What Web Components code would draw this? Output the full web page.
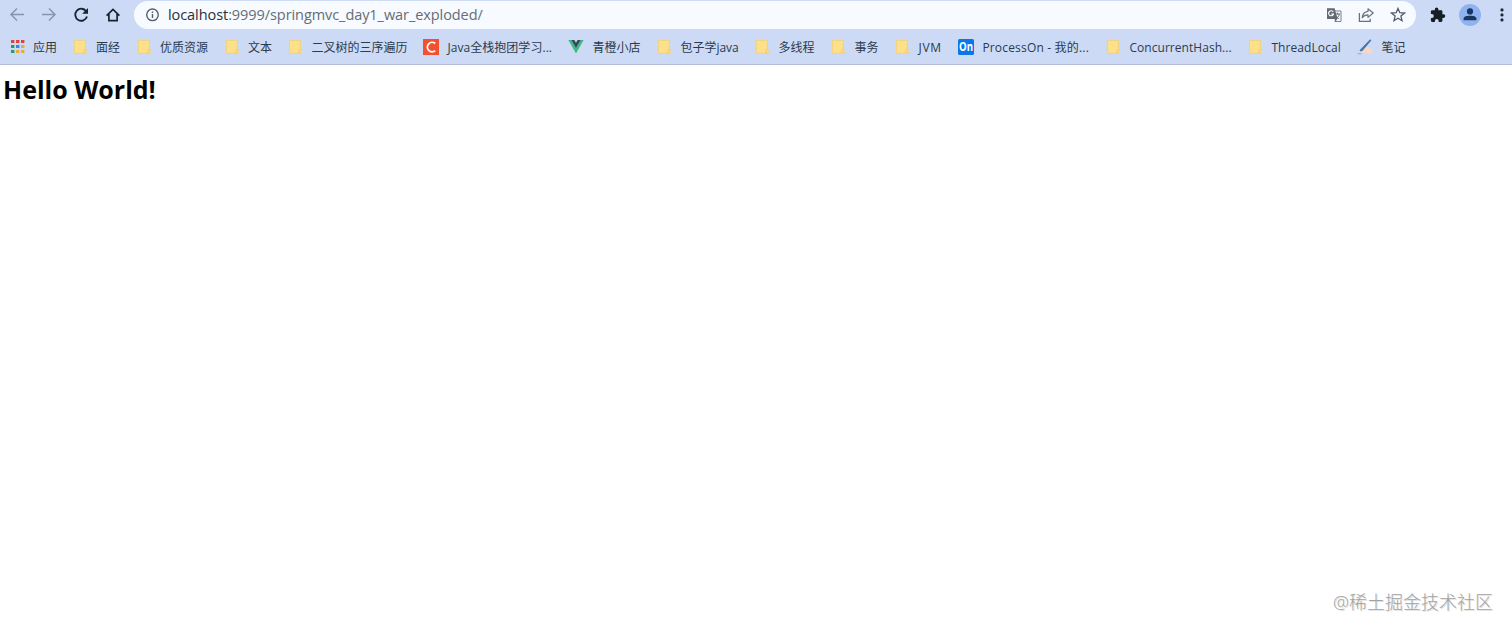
<!DOCTYPE html>
<html lang="zh-CN">
<head>
<meta charset="utf-8">
<title>Hello World</title>
<style>
  html, body { margin: 0; height: 100%; overflow: hidden; background: #fff; }
  body { font-family: "Open Sans", "Noto Sans CJK SC", sans-serif; }
</style>
</head>
<body>
<browser-window></browser-window>
<script>
const colors = {
  toolbar: "#cddaf5",
  field: "#f7faff",
  line: "#b1bdd8",
  ink: "#2b3a4c",
  icon: "#17242f",
  muted: "#8795ad",
};

const icons = {
  back: `<path d="M15 7.5H2M8 1.5l-6 6 6 6" fill="none" stroke="${colors.muted}" stroke-width="1.5"/>`,
  forward: `<path d="M1 7.5h13M8 1.5l6 6-6 6" fill="none" stroke="${colors.muted}" stroke-width="1.5"/>`,
  reload: `<path d="M13.2 4.3A6 6 0 1 0 14 9.5" fill="none" stroke="${colors.icon}" stroke-width="1.8"/><path d="M15 .9v5.8H9.2z" fill="${colors.icon}"/>`,
  home: `<path d="M1.6 8.6 8 2.4l6.4 6.2M3.9 7v6.6h8.2V7" fill="none" stroke="${colors.icon}" stroke-width="1.7"/>`,
  info: `<circle cx="8.5" cy="7.8" r="5.8" fill="none" stroke="#56606b" stroke-width="1.4"/><path d="M8.5 7.1v3.8M8.5 4.5v1.4" stroke="#56606b" stroke-width="1.4"/>`,
  translate: `<path d="M7 4h8v10.5H8.5" fill="#f7faff" stroke="#7b8189"/><path d="M1 1.2h7.6l3 10.8H1z" fill="#626970"/><path d="M7.3 5.1A2.5 2.5 0 1 0 7.5 7H5.2" fill="none" stroke="#fff" stroke-width="1.1"/><path d="M9 7h5M11.5 5.7V7M13.3 7c-.3 2-1.4 3.4-3 4.5M10.2 8.7c.6 1.5 1.6 2.4 3 3" fill="none" stroke="#626970"/><path d="M8.5 12h2.8l-2 2.8z" fill="#626970"/>`,
  share: `<path d="M1.4 6v8.4h10.8v-2.6" fill="none" stroke="#69727d" stroke-width="1.3"/><path d="M10 1.8 15.2 6 10 10.4V7.8c-2.8 0-4.6 1-5.8 3 .3-3.5 2.5-6 5.8-6.4z" fill="none" stroke="#69727d" stroke-width="1.2" stroke-linejoin="round"/>`,
  star: `<path d="m8 1.4 1.8 4.3 4.7.4-3.6 3 1.1 4.6L8 11.2l-4 2.5 1.1-4.6-3.6-3 4.7-.4z" fill="none" stroke="#515c69" stroke-width="1.3"/>`,
  puzzle: `<path d="M13.5 7.3h-1.1V4.5c0-.8-.6-1.3-1.3-1.3H8.4V2.4a1.8 1.8 0 0 0-3.6 0v.8H2.2c-.8 0-1.3.6-1.3 1.3v2.6h1a1.9 1.9 0 0 1 0 3.8h-1v2.7c0 .8.6 1.4 1.3 1.4h2.7v-1a1.9 1.9 0 0 1 3.8 0v1h2.4c.8 0 1.3-.6 1.3-1.4v-2.7h1.1a1.8 1.8 0 0 0 0-3.6z" fill="#161e26"/>`,
  person: `<circle cx="8" cy="4.4" r="3.1" fill="#193560"/><path d="M1.6 13.3v-1.7C1.6 9.5 5 8.8 8 8.8s6.4.7 6.4 2.8v1.7z" fill="#193560"/>`,
  more: `<g fill="#202a35"><circle cx="8" cy="2.9" r="1.6"/><circle cx="8" cy="7.9" r="1.6"/><circle cx="8" cy="12.9" r="1.6"/></g>`,
  apps: `<g><path fill="#e0443e" d="M2 1h3.4v3H2zM7 1h3.4v3H7zM12 1h3.4v3H12z"/><path fill="#249f58" d="M2 6h3.4v3H2zM2 11h3.4v3H2z"/><path fill="#3b82ec" d="M7 6h3.4v3H7z"/><path fill="#e8ad35" d="M12 6h3.4v3H12zM7 11h3.4v3H7zM12 11h3.4v3H12z"/></g>`,
  folder: `<path d="M2.4 1.4h11v8.9l.9.9v3.1H2.4z" fill="#fee08a" stroke="#f3d070" stroke-width=".8"/><path d="M12 14.2v-2.6l1.4-1.6" fill="none" stroke="#e9bf50" stroke-width=".8"/>`,
  c: `<path d="M0 0h16v16H0z" fill="#f4502f"/><path d="M12.2 4.5A4.7 4.7 0 1 0 12.2 11.6" fill="none" stroke="#fff" stroke-width="1.9"/>`,
  vue: `<path d="M.3 1h3.3L8 8.6 12.4 1h3.3L8 14.5z" fill="#42b883"/><path d="M3.4 1h3L8 3.8 9.6 1h3L8 9z" fill="#35495e"/>`,
  on: `<rect width="16" height="16" rx="1.5" fill="#0878e8"/><text x="8" y="12.2" text-anchor="middle" font-family="Open Sans, sans-serif" font-size="11.5" font-weight="700" fill="#fff" textLength="14" lengthAdjust="spacingAndGlyphs">On</text>`,
  pen: `<path d="M5 8.4 8.4 6.8l4.6 2.6 2.6 1.2-1 3.8-4.4.2-5.4-.8-.8-2z" fill="#f8d6c8"/><path d="m2 13.6 1-2.8L13.2.2l1.2 1-8.8 10.6z" fill="#3c79ad"/><path d="m.8 14.8 1.7-3.4 1.9 1.6z" fill="#d5e0e7"/><path d="M.5 14.8h4" stroke="#839eb7" stroke-width=".8"/>`,
};

// label, icon, label width, letter spacing
const bookmarks = [
  ["应用", "apps", 23, 0],
  ["面经", "folder", 24, 0],
  ["优质资源", "folder", 48, 0],
  ["文本", "folder", 23.4, 0],
  ["二叉树的三序遍历", "folder", 96, 0],
  ["Java全栈抱团学习...", "c", 105, 0.05],
  ["青橙小店", "vue", 48, 0],
  ["包子学java", "folder", 58, 0],
  ["多线程", "folder", 36, 0],
  ["事务", "folder", 24, 0],
  ["JVM", "folder", 24, 0.8],
  ["ProcessOn - 我的...", "on", 107, 0.18],
  ["ConcurrentHash...", "folder", 102, 0.05],
  ["ThreadLocal", "folder", 70, 0.08],
  ["笔记", "pen", 24, 0],
];

class UiIcon extends HTMLElement {
  constructor() {
    super();
    this.attachShadow({ mode: "open" });
  }

  connectedCallback() {
    this.shadowRoot.innerHTML = `
      <style>
        :host { display: block; flex: none; width: 16px; height: 16px; }
        svg { display: block; width: 100%; height: 100%; }
      </style>
      <svg viewBox="0 0 16 16">${icons[this.getAttribute("name")]}</svg>`;
  }
}

class AddressBar extends HTMLElement {
  constructor() {
    super();
    this.attachShadow({ mode: "open" });
    this.shadowRoot.innerHTML = `
      <style>
        :host {
          display: flex; align-items: center; box-sizing: border-box; flex: none;
          width: 1282.4px; height: 28px; padding: 0 10px;
          border-radius: 14px; background: ${colors.field};
        }
        .url {
          flex: 1; margin-left: 8px; font-size: 14.5px; line-height: 20px;
          color: #656d77; white-space: nowrap; letter-spacing: -0.07px;
        }
        .host { color: #26313d; }
        .actions { display: flex; gap: 16px; }
      </style>
      <ui-icon name="info"></ui-icon>
      <div class="url"><span class="host">localhost</span>:9999/springmvc_day1_war_exploded/</div>
      <div class="actions">
        <ui-icon name="translate"></ui-icon>
        <ui-icon name="share"></ui-icon>
        <ui-icon name="star"></ui-icon>
      </div>`;
  }
}

class BrowserToolbar extends HTMLElement {
  constructor() {
    super();
    this.attachShadow({ mode: "open" });
    this.shadowRoot.innerHTML = `
      <style>
        :host { display: flex; align-items: center; height: 29px; padding-left: 9px; }
        .nav { display: flex; gap: 16px; margin-right: 13px; }
        .avatar {
          display: flex; align-items: center; justify-content: center; flex: none;
          width: 22px; height: 22px; margin: 0 12.6px 0 13px;
          border-radius: 50%; background: #8fb2f0;
        }
        .puzzle { margin-left: 14px; }
      </style>
      <div class="nav">
        <ui-icon name="back"></ui-icon>
        <ui-icon name="forward"></ui-icon>
        <ui-icon name="reload"></ui-icon>
        <ui-icon name="home"></ui-icon>
      </div>
      <address-bar></address-bar>
      <ui-icon class="puzzle" name="puzzle"></ui-icon>
      <div class="avatar"><ui-icon name="person"></ui-icon></div>
      <ui-icon name="more"></ui-icon>`;
  }
}

class BookmarkItem extends HTMLElement {
  constructor() {
    super();
    this.attachShadow({ mode: "open" });
  }

  connectedCallback() {
    this.shadowRoot.innerHTML = `
      <style>
        :host { display: flex; align-items: center; flex: none; gap: 8px; }
        .label {
          width: ${this.getAttribute("width")}px; padding-top: 2px;
          font-size: 12px; line-height: 18px;
          letter-spacing: ${this.getAttribute("spacing")}px;
          color: ${colors.ink}; white-space: nowrap;
        }
      </style>
      <ui-icon name="${this.getAttribute("icon")}"></ui-icon>
      <div class="label"><slot></slot></div>`;
  }
}

class BookmarkBar extends HTMLElement {
  constructor() {
    super();
    this.attachShadow({ mode: "open" });
    this.shadowRoot.innerHTML = `
      <style>
        :host { display: flex; align-items: center; gap: 16px; height: 36px; padding-left: 9px; }
      </style>
      ${bookmarks.map(([label, icon, width, spacing]) =>
        `<bookmark-item icon="${icon}" width="${width}" spacing="${spacing}">${label}</bookmark-item>`).join("")}`;
  }
}

class BrowserWindow extends HTMLElement {
  constructor() {
    super();
    this.attachShadow({ mode: "open" });
    this.shadowRoot.innerHTML = `
      <style>
        :host { display: flex; flex-direction: column; height: 100%; }
        header {
          box-sizing: border-box; height: 65px; flex: none;
          background: ${colors.toolbar}; border-bottom: 1px solid ${colors.line};
        }
        main { flex: 1; display: flex; flex-direction: column; justify-content: space-between; }
        h1 { margin: 6px 0 0 3px; font-size: 25px; line-height: 36px; font-weight: 700; color: #000; }
        .watermark {
          align-self: flex-end; margin: 0 19px 17px 0; font-size: 18px; line-height: 26px;
          font-weight: 300; color: #a2a2a2; text-shadow: 1px 1px 0 #e2e2e2;
        }
      </style>
      <header>
        <browser-toolbar></browser-toolbar>
        <bookmark-bar></bookmark-bar>
      </header>
      <main>
        <h1>Hello World!</h1>
        <div class="watermark">@稀土掘金技术社区</div>
      </main>`;
  }
}

customElements.define("ui-icon", UiIcon);
customElements.define("address-bar", AddressBar);
customElements.define("browser-toolbar", BrowserToolbar);
customElements.define("bookmark-item", BookmarkItem);
customElements.define("bookmark-bar", BookmarkBar);
customElements.define("browser-window", BrowserWindow);
</script>
</body>
</html>
